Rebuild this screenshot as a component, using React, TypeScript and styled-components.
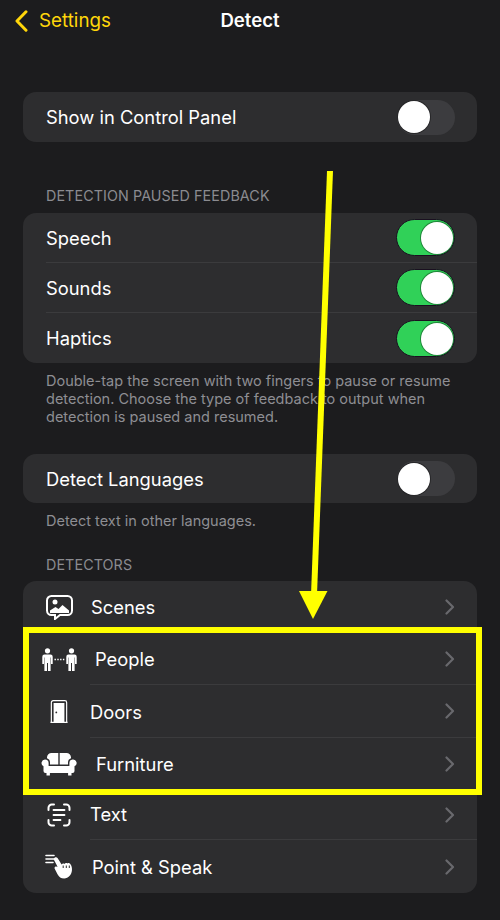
import React from "react";
import styled, { createGlobalStyle } from "styled-components";

const Global = createGlobalStyle`
  html, body { margin: 0; padding: 0; background: #1c1c1e; }
  body { font-family: Inter, "Liberation Sans", sans-serif; -webkit-font-smoothing: antialiased; }
`;

const Page = styled.div`
  position: relative;
  width: 500px;
  height: 920px;
  overflow: hidden;
  background: #1c1c1e;
  color: #fff;
`;

const NavBar = styled.header`
  position: relative;
  height: 41px;
  display: flex;
  align-items: center;
  justify-content: center;
`;

const BackLink = styled.div`
  position: absolute;
  left: 15px;
  top: 9px;
  display: flex;
  align-items: center;
  gap: 11px;
  color: #ffd60a;
  font-size: 18.8px;
  line-height: 23px;
`;

const Title = styled.h1`
  margin: 0;
  font-size: 18.6px;
  font-weight: 600;
  line-height: 23px;
`;

const Content = styled.main`
  padding: 51px 23px 0;
  display: flex;
  flex-direction: column;
`;

const Card = styled.section<{ $mt?: number }>`
  background: #2d2d2f;
  border-radius: 13px;
  margin-top: ${(p) => p.$mt ?? 0}px;
  overflow: hidden;
`;

const SectionLabel = styled.div<{ $mt: number }>`
  margin-top: ${(p) => p.$mt}px;
  padding-left: 23px;
  font-size: 14.3px;
  line-height: 18px;
  color: #8b8b90;
  letter-spacing: 0.1px;
`;

const Footnote = styled.p<{ $mt?: number }>`
  margin: ${(p) => p.$mt ?? 9}px 0 0;
  padding: 0 23px;
  font-size: 14.5px;
  line-height: 18px;
  color: #8e8e93;
`;

const Row = styled.div<{ $h: number }>`
  height: ${(p) => p.$h}px;
  display: flex;
  align-items: stretch;
`;

const IconSlot = styled.div`
  width: 62px;
  margin-left: 5px;
  flex: none;
  display: flex;
  align-items: center;
  justify-content: center;
`;

const RowBody = styled.div<{ $sep: boolean; $ml?: number }>`
  flex: 1;
  min-width: 0;
  margin-left: ${(p) => p.$ml ?? 0}px;
  display: flex;
  align-items: center;
  justify-content: space-between;
  border-bottom: ${(p) => (p.$sep ? "1px solid #3b3b3d" : "0")};
`;

const RowLabel = styled.span<{ $pl?: number; $dy?: number }>`
  padding-left: ${(p) => p.$pl ?? 0}px;
  font-size: 18.35px;
  line-height: 24px;
  position: relative;
  top: ${(p) => p.$dy ?? 0}px;
`;

const Track = styled.span<{ $on: boolean }>`
  position: relative;
  width: ${(p) => (p.$on ? 59 : 58)}px;
  height: ${(p) => (p.$on ? 37 : 35)}px;
  margin-right: 22px;
  border-radius: 19px;
  flex: none;
  box-sizing: border-box;
  background: ${(p) => (p.$on ? "#30d158" : "#3c3c3f")};
  border: ${(p) => (p.$on ? "1px solid #1a1020" : "0")};
`;

const Knob = styled.span<{ $on: boolean }>`
  position: absolute;
  top: ${(p) => (p.$on ? 2 : 1.5)}px;
  ${(p) => (p.$on ? "right: 1px;" : "left: 1px;")}
  width: 32px;
  height: 32px;
  border-radius: 50%;
  background: #fff;
  box-shadow: 0 0 0 1px rgba(0, 0, 0, 0.35);
`;

const Chevron = styled.svg`
  margin-right: 22px;
  flex: none;
`;

const Highlight = styled.div`
  position: absolute;
  left: 23px;
  top: 627px;
  width: 459px;
  height: 168px;
  box-sizing: border-box;
  border: 6px solid #ffff00;
  pointer-events: none;
`;

const ArrowLayer = styled.svg`
  position: absolute;
  left: 0;
  top: 0;
  pointer-events: none;
`;

const Switch = ({ on }: { on: boolean }) => (
  <Track $on={on}>
    <Knob $on={on} />
  </Track>
);

const Disclosure = () => (
  <Chevron width="10" height="16" viewBox="0 0 10 16" fill="none">
    <path d="M1.5 1.5 8 8l-6.500 6.500" stroke="#69696d" strokeWidth="2.200" strokeLinecap="round" strokeLinejoin="round" />
  </Chevron>
);

const ScenesIcon = () => (
  <svg width="27" height="25" viewBox="0 0 27 25" fill="none">
    <path d="M5.500 1h16A4.500 4.500 0 0 1 26 5.500v10a4.500 4.500 0 0 1-4.500 4.500H14l-5 4v-4H5.500A4.500 4.500 0 0 1 1 15.500v-10A4.500 4.500 0 0 1 5.500 1Z" stroke="#fff" strokeWidth="2" />
    <circle cx="9" cy="7" r="2.500" fill="#fff" />
    <path d="M4 18v-2.500l5.500-3.500 3 2 4-4 6.500 5.500V18H4Z" fill="#fff" />
  </svg>
);

const Person = ({ x }: { x: number }) => (
  <g fill="#fff" transform={`translate(${x} 0)`}>
    <circle cx="5.500" cy="2.800" r="2.600" />
    <path d="M2.500 6.500h6a2.200 2.200 0 0 1 2.200 2.200v7.300H9V9.500h-.4V23H6v-8h-1v8H2.400V9.500H2V16H.3V8.700a2.200 2.200 0 0 1 2.200-2.200Z" />
  </g>
);

const PeopleIcon = () => (
  <svg width="35" height="23" viewBox="0 0 35 23" fill="none">
    <Person x={0} />
    <Person x={24} />
    <path d="M12.500 11.500h10" stroke="#fff" strokeWidth="1.500" strokeDasharray="1.400 1.400" />
  </svg>
);

const DoorIcon = () => (
  <svg width="18" height="25" viewBox="0 0 20 26" fill="none">
    <path d="M1.500 25V3a2 2 0 0 1 2-2h13a2 2 0 0 1 2 2v22" stroke="#fff" strokeWidth="1.300" />
    <path d="M.5 25h19" stroke="#fff" strokeWidth="1.300" />
    <path d="M4 3.500h12V25H4z" fill="#fff" />
    <circle cx="7" cy="14" r="1" fill="#2d2d2f" />
  </svg>
);

const SofaIcon = () => (
  <svg width="36" height="23" viewBox="0 0 36 23" fill="#fff">
    <path d="M6 4.500A4.500 4.500 0 0 1 10.500 0h6.800v11.500H9V9.500a4.500 4.500 0 0 0-3-4.200V4.500Z" />
    <path d="M18.700 0h6.800A4.500 4.500 0 0 1 30 4.500v.8a4.500 4.500 0 0 0-3 4.200v2h-8.300V0Z" />
    <path d="M4 6.500a3.600 3.600 0 0 1 3.600 3.600V13h20.800v-2.900A3.600 3.600 0 1 1 33.500 13.300V18a2 2 0 0 1-2 2h-1v2.500h-3.400V20H8.900v2.500H5.500V20h-1a2 2 0 0 1-2-2v-4.700A3.600 3.600 0 0 1 4 6.500Z" />
  </svg>
);

const TextIcon = () => (
  <svg width="24" height="24" viewBox="0 0 24 24" fill="none" stroke="#fff" strokeLinecap="round">
    <path strokeWidth="2" d="M1.500 7V4.800a3.300 3.300 0 0 1 3.300-3.300H7M17 1.500h2.200a3.300 3.300 0 0 1 3.300 3.300V7M22.500 17v2.200a3.300 3.300 0 0 1-3.300 3.300H17M7 22.500H4.800a3.300 3.300 0 0 1-3.300-3.300V17" />
    <path strokeWidth="1.800" d="M6.500 7h11M6.500 12h11M6.500 17h7" />
  </svg>
);

const PointIcon = () => (
  <svg width="29" height="25" viewBox="0 0 29 25" fill="none">
    <path d="M1 1.500h8M1 5h9M1 8.500h7" stroke="#fff" strokeWidth="1.600" strokeLinecap="round" />
    <path fill="#fff" d="M9.800 3.500c1-.7 2.300-.3 2.900.7l3.900 6.200c.6-1 2-1.200 2.900-.5.500-1 1.900-1.200 2.900-.5.800-.7 2-.5 2.700.4 1.600 2 2.200 4.500 1.800 7-.6 4-3.400 7.700-7.700 7.700-3.300 0-5.200-1.500-6.700-4.300l-2.800-5.500c-.5-1 0-2 1-2.300l1.900.4-3.600-6.700c-.5-1-.2-1.700.8-2.600Z" />
    <path d="M18.200 11.500v2.500M21.300 11.500v2.500M24.300 11.500v2.500" stroke="#2d2d2f" strokeWidth="1" />
  </svg>
);

const toggles = [
  { label: "Speech", h: 50 },
  { label: "Sounds", h: 50 },
  { label: "Haptics", h: 50 },
];

const detectors = [
  { label: "Scenes", icon: <ScenesIcon />, h: 52, pl: 1, dy: 0 },
  { label: "People", icon: <PeopleIcon />, h: 52, pl: 5, dy: 0 },
  { label: "Doors", icon: <DoorIcon />, h: 53, pl: 0, dy: 1 },
  { label: "Furniture", icon: <SofaIcon />, h: 52, pl: 6, dy: 0 },
  { label: "Text", icon: <TextIcon />, h: 50, pl: 0, dy: -1 },
  { label: "Point & Speak", icon: <PointIcon />, h: 53, pl: 2, dy: 0 },
];

export default function App() {
  return (
    <Page>
      <Global />
      <NavBar>
        <BackLink>
          <svg width="13" height="22" viewBox="0 0 13 22" fill="none">
            <path d="M11 1.800 2 11l9 9.200" stroke="#ffd60a" strokeWidth="3" strokeLinecap="round" strokeLinejoin="round" />
          </svg>
          Settings
        </BackLink>
        <Title>Detect</Title>
      </NavBar>
      <Content>
        <Card>
          <Row $h={50}>
            <RowBody $sep={false} $ml={23}>
              <RowLabel>Show in Control Panel</RowLabel>
              <Switch on={false} />
            </RowBody>
          </Row>
        </Card>
        <SectionLabel $mt={45}>DETECTION PAUSED FEEDBACK</SectionLabel>
        <Card $mt={8}>
          {toggles.map((t, i) => (
            <Row key={t.label} $h={t.h}>
              <RowBody $sep={i < toggles.length - 1} $ml={23}>
                <RowLabel>{t.label}</RowLabel>
                <Switch on />
              </RowBody>
            </Row>
          ))}
        </Card>
        <Footnote>
          Double-tap the screen with two fingers to pause or resume
          <br />
          detection. Choose the type of feedback to output when
          <br />
          detection is paused and resumed.
        </Footnote>
        <Card $mt={28}>
          <Row $h={49}>
            <RowBody $sep={false} $ml={23}>
              <RowLabel>Detect Languages</RowLabel>
              <Switch on={false} />
            </RowBody>
          </Row>
        </Card>
        <Footnote $mt={9}>Detect text in other languages.</Footnote>
        <SectionLabel $mt={26}>DETECTORS</SectionLabel>
        <Card $mt={7}>
          {detectors.map((d, i) => (
            <Row key={d.label} $h={d.h}>
              <IconSlot>{d.icon}</IconSlot>
              <RowBody $sep={i < detectors.length - 1}>
                <RowLabel $pl={d.pl} $dy={d.dy}>
                  {d.label}
                </RowLabel>
                <Disclosure />
              </RowBody>
            </Row>
          ))}
        </Card>
      </Content>
      <ArrowLayer width="500" height="920" viewBox="0 0 500 920">
        <path d="M330 171 314 595" stroke="#ffff00" strokeWidth="6" />
        <path d="M299 591h28.500L313 619Z" fill="#ffff00" />
      </ArrowLayer>
      <Highlight />
    </Page>
  );
}
